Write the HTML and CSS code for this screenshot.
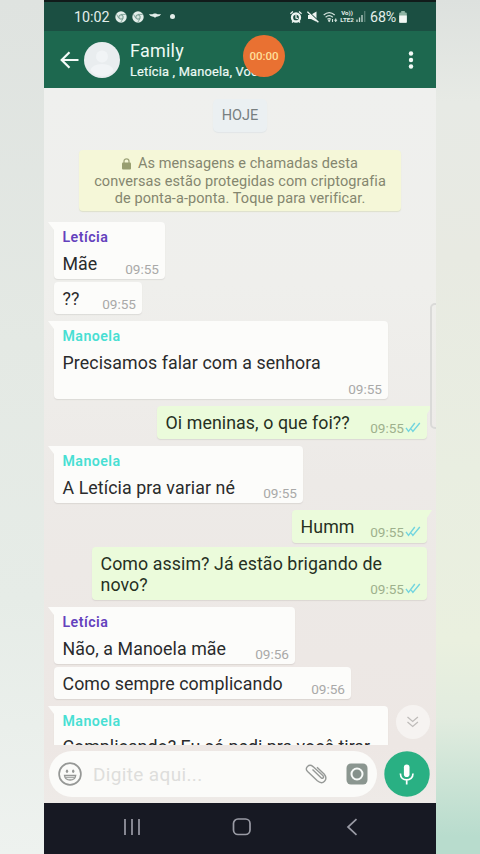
FILE: index.html
```html
<!DOCTYPE html>
<html lang="pt-BR">
<head>
<meta charset="utf-8">
<title>Family</title>
<link rel="stylesheet" href="styles.css">
</head>
<body>
<svg class="defs" width="0" height="0">
  <symbol id="ticks" viewBox="0 0 16 12"><path d="M1 6.800l2.500 3.600L9.800 2M6.200 8.100l1.700 2.300L14.800 2" fill="none" stroke="#72d5df" stroke-width="1.400"/></symbol>
  <symbol id="chrome" viewBox="0 0 12 12"><circle cx="6" cy="6" r="5.700" fill="#e3eeea"/><path d="M6 3.400h4.800M3.800 7.300L1.500 3.200M8.200 7.300L5.700 11.400" stroke="#6d9388" stroke-width=".8"/><circle cx="6" cy="6" r="2.200" fill="#d6e5df" stroke="#6d9388"/></symbol>
</svg>
<div class="phone">
  <div class="status">
    <span class="clock">10:02</span>
    <svg class="s-chrome" width="12" height="12"><use href="#chrome"/></svg>
    <svg class="s-chrome" width="12" height="12"><use href="#chrome"/></svg>
    <svg class="s-bat" width="12" height="6" viewBox="0 0 12 6"><path d="M0 1Q3 1.600 4 1L5 .5h2l1 .5q1 .6 4 0-.8 2.400-3.200 2.500Q7.500 3.500 6 4.700 4.500 3.500 3.200 3.500.800 3.400 0 1z" fill="#e3eeea"/></svg>
    <span class="s-dot"></span>
    <div class="status-right">
      <svg width="12" height="12" viewBox="0 0 12 12"><circle cx="6" cy="6.500" r="4" fill="none" stroke="#eef5f2" stroke-width="2.300"/><path d="M.4 2.700L3 .6M11.600 2.700L9 .6M2 11.500l1.500-1.500M10 11.500L8.500 10M6 4v3l2 .6" fill="none" stroke="#eef5f2" stroke-width="1.300"/></svg>
      <svg class="s-mute" width="12" height="12" viewBox="0 0 12 12"><path d="M1 4h2.500L9.500.5v10.200L4 8H1z" fill="#eef5f2"/><path d="M1 .2l11 10.500" stroke="#1b4f42" stroke-width="1.300"/><path d="M.4.700l11 10.500" stroke="#eef5f2" stroke-width="1.400"/></svg>
      <svg class="s-wifi" width="15" height="12" viewBox="0 0 15 12"><path d="M.7 4Q6.200-.8 11.700 4M2.600 6.200q3.600-3 7.200 0M4.400 8.300q1.800-1.500 3.600 0" fill="none" stroke="#d5e4df" stroke-width="1.200"/><path d="M6.200 8.200l1.400 1.500-1.400 1.600-1.400-1.600z" fill="#d5e4df"/><path d="M9.500 8v3M12.700 7.500v3.600M11.300 9.300h2.800" stroke="#d5e4df" stroke-width="1.100"/></svg>
      <span class="lte"><b>Vo))</b><b>LTE2</b></span>
      <svg class="s-signal" width="10" height="11" viewBox="0 0 10 11"><path d="M1 8.500V11M3.500 6.500V11M6 4V11" stroke="#c6d9d2" stroke-width="1.300"/><path d="M8.700 0V11" stroke="#588075" stroke-width="1.300"/></svg>
      <span class="pct">68%</span>
      <svg class="s-batt" width="8" height="12" viewBox="0 0 8 12"><path d="M2.200 0h3.600v1.500h1q1 0 1 1V11q0 .8-.8.8H1Q.2 11.800.2 11V2.500q0-1 1-1h1z" fill="#8fb5a5"/><path d="M.2 4.500h7.600V11q0 .8-.8.8H1Q.2 11.800.2 11z" fill="#f2f7f4"/></svg>
    </div>
  </div>
  <header class="header">
    <svg class="back" width="19" height="18" viewBox="0 0 19 18"><path d="M18.500 9H2M9.500 1.200L1.700 9l7.800 7.800" fill="none" stroke="#f4fbf8" stroke-width="2.200"/></svg>
    <svg class="avatar" width="36" height="36" viewBox="0 0 36 36"><circle cx="18" cy="18" r="18" fill="#e9edef"/><circle cx="18" cy="14.500" r="6" fill="#f1f4f6"/><path d="M6.500 28.500Q8 22 18 22t11.500 6.500Q25 34 18 34T6.500 28.500z" fill="#f1f4f6"/></svg>
    <div class="titles">
      <div class="title">Family</div>
      <div class="members">Letícia , Manoela, Você</div>
    </div>
    <svg class="more" width="6" height="18" viewBox="0 0 6 18"><circle cx="3" cy="2.500" r="2.200"/><circle cx="3" cy="9" r="2.200"/><circle cx="3" cy="15.500" r="2.200"/></svg>
    <div class="timer">00:00</div>
  </header>
  <main class="chat">
    <div class="day">HOJE</div>
    <div class="notice">
      <div class="n1"><svg width="9" height="12" viewBox="0 0 9 12"><path d="M2 5V3.300a2.500 2.500 0 0 1 5 0V5" fill="none" stroke="#a0a57b" stroke-width="1.300"/><rect y="4.500" width="9" height="7" rx="1" fill="#989e70"/></svg>As mensagens e chamadas desta</div>
      <div class="n2">conversas estão protegidas com criptografia</div>
      <div class="n3">de ponta-a-ponta. Toque para verificar.</div>
    </div>
    <div class="msg in tail w-mae"><div class="name leticia">Letícia</div><div class="text">Mãe</div><div class="time">09:55</div></div>
    <div class="msg in next w-qq"><div class="text">??</div><div class="time">09:55</div></div>
    <div class="msg in tail tall w-full"><div class="name manoela">Manoela</div><div class="text">Precisamos falar com a senhora</div><div class="time">09:55</div></div>
    <div class="msg out tail w-oi"><div class="text">Oi meninas, o que foi??</div><div class="time">09:55<svg width="16" height="12"><use href="#ticks"/></svg></div></div>
    <div class="msg in tail w-var"><div class="name manoela">Manoela</div><div class="text">A Letícia pra variar né</div><div class="time">09:55</div></div>
    <div class="msg out tail w-humm"><div class="text">Humm</div><div class="time">09:55<svg width="16" height="12"><use href="#ticks"/></svg></div></div>
    <div class="msg out next double w-assim"><div class="text">Como assim? Já estão brigando de<br>novo?</div><div class="time">09:55<svg width="16" height="12"><use href="#ticks"/></svg></div></div>
    <div class="msg in tail w-nao"><div class="name leticia">Letícia</div><div class="text">Não, a Manoela mãe</div><div class="time">09:56</div></div>
    <div class="msg in next w-comp"><div class="text">Como sempre complicando</div><div class="time">09:56</div></div>
    <div class="msg in tail tall last w-full"><div class="name manoela">Manoela</div><div class="text">Complicando? Eu só pedi pra você tirar</div></div>
    <div class="scrollmark"></div>
    <svg class="jump" width="36" height="36" viewBox="0 0 36 36"><circle cx="18" cy="17" r="17" fill="#f6f3f1"/><path d="M12.500 12l5.200 4.500 5.200-4.500M12.500 17l5.200 4.500 5.200-4.500" fill="none" stroke="#bfbcba" stroke-width="1.300"/></svg>
  </main>
  <div class="composer">
    <div class="field">
      <svg class="smile" width="24" height="24" viewBox="0 0 24 24"><circle cx="12" cy="12" r="10.900" fill="none" stroke="#969896" stroke-width="1.700"/><ellipse cx="9" cy="9.300" rx="1.200" ry="1.800" fill="#969896"/><ellipse cx="15.200" cy="9.300" rx="1.200" ry="1.800" fill="#969896"/><path d="M6.500 13.500h11.200q-.6 4.500-5.600 4.500t-5.600-4.500z" fill="#eff0ee" stroke="#969896" stroke-width="1.300"/><path d="M7.500 15.500h9.200" stroke="#969896" stroke-width=".8"/></svg>
      <span class="placeholder">Digite aqui...</span>
      <svg class="clip" width="22" height="20" viewBox="0 0 22 20"><path d="M7.500 5.500l8.300 8q1.300 1.400 2.300.4t-.3-2.300L8 2.600Q5 .1 2.500 2.500t.1 5.100l9.700 9.200q4.300 3.500 7.200.4t-.2-7L12 3.200" fill="none" stroke="#969997" stroke-width="1.400"/></svg>
      <svg class="camera" width="22" height="22" viewBox="0 0 22 22"><rect x=".5" y=".5" width="21" height="21" rx="4.500" fill="#8b9690"/><circle cx="11" cy="11" r="5.500" fill="#85918b" stroke="#f7faf8" stroke-width="2"/></svg>
    </div>
    <svg class="mic" width="46" height="46" viewBox="0 0 46 46"><circle cx="23" cy="23" r="22.700" fill="#29b083"/><rect x="19.900" y="13.500" width="5.600" height="12.500" rx="2.800" fill="#fff"/><path d="M16.400 22.500c0 8.500 12.600 8.500 12.600 0M22.700 29v4.500" fill="none" stroke="#fff" stroke-width="1.700"/></svg>
  </div>
  <nav class="nav">
    <svg width="18" height="18" viewBox="0 0 18 18"><path d="M2 1v16M9 1v16M16 1v16"/></svg>
    <svg class="home" width="20" height="18" viewBox="0 0 20 18"><rect x="1.500" y="1" width="16.500" height="15.500" rx="4.500"/></svg>
    <svg width="12" height="18" viewBox="0 0 12 18"><path d="M10.500 1.200L2 9l8.500 7.800"/></svg>
  </nav>
</div>
</body>
</html>
```
FILE: styles.css
```css
* { box-sizing: border-box; }
body {
  margin: 0;
  width: 480px;
  height: 854px;
  overflow: hidden;
  padding: 0 44px;
  font-family: Roboto, sans-serif;
  background:
    linear-gradient(180deg, #dde1de 0, #e7eae5 12%, #e8eae2 30%, #e9eee1 55%, #eaf0df 75%, #e2ecdf 84%, #b8dccd 98%) right / 44px 100% no-repeat,
    linear-gradient(180deg, #dfe3e0 0, #e4e9e4 40%, #e6ece7 70%, #eef2ef 100%);
}
svg { display: block; flex: none; }
.defs { position: absolute; }
.phone { width: 392px; height: 854px; display: flex; flex-direction: column; overflow: hidden; }

.status {
  height: 31px;
  flex: none;
  background: #1b4f42;
  border-top: 2px solid #111b1a;
  display: flex;
  align-items: center;
  padding: 0 29px 0 30px;
  color: #e3eeea;
}
.clock { font-size: 14.300px; width: 35px; margin-right: 6px; white-space: nowrap; }
.s-chrome { margin-right: 5px; }
.s-bat { margin: -2px 9px 0 0; }
.s-dot { width: 5px; height: 5px; border-radius: 50%; background: #e3eeea; }
.status-right { margin-left: auto; display: flex; align-items: center; }
.s-mute { margin-left: 5px; }
.s-wifi { margin-left: 4px; }
.lte { width: 16px; margin-left: 1px; font-size: 6.200px; line-height: 7px; text-align: center; display: flex; flex-direction: column; }
.s-signal { margin-left: 1px; }
.pct { font-size: 14.300px; margin-left: 4px; width: 28px; white-space: nowrap; letter-spacing: -.1px; }
.s-batt { margin-left: 1px; }

.header {
  height: 57px;
  flex: none;
  background: #1d684f;
  display: flex;
  align-items: center;
  padding: 0 22px 0 16px;
  position: relative;
  color: #eefaf5;
}
.back { margin-right: 5px; }
.titles { margin-left: 10px; flex: 1; white-space: nowrap; }
.title { font-size: 18px; line-height: 22px; letter-spacing: .25px; margin-top: 3px; }
.members { font-size: 12.800px; line-height: 20px; letter-spacing: .2px; -webkit-text-stroke: .2px; }
.more { fill: #f4fbf8; }
.timer {
  position: absolute;
  left: 199px;
  top: 4px;
  width: 42px;
  height: 42px;
  border-radius: 50%;
  background: #e97132;
  color: #ffdf9a;
  font-size: 11.500px;
  font-weight: 500;
  line-height: 42px;
  text-align: center;
}

.chat {
  height: 657px;
  flex: none;
  position: relative;
  overflow: hidden;
  display: flex;
  flex-direction: column;
  align-items: flex-start;
  padding: 11px 9px 0 10px;
  background: linear-gradient(180deg, #eff0ee 0, #efefec 30%, #edeae7 60%, #ede7e4 100%);
}
.day {
  width: 54px;
  height: 33px;
  flex: none;
  margin-left: 159px;
  border-radius: 5px;
  background: #ebf0f2;
  box-shadow: 0 1px 1px #e1e5e7;
  color: #777f81;
  font-size: 14.500px;
  line-height: 33px;
  text-align: center;
}
.notice {
  width: 322px;
  height: 61px;
  flex: none;
  margin: 18px 0 0 25px;
  padding-top: 5px;
  border-radius: 4px;
  background: #f5f7d8;
  box-shadow: 0 1px 1px #dddfcb;
  color: #84866f;
  font-size: 14.500px;
  letter-spacing: .08px;
  line-height: 17.700px;
  text-align: center;
  white-space: nowrap;
}
.n1 { display: flex; justify-content: center; align-items: center; }
.n1 svg { margin-right: 7px; }

.msg {
  position: relative;
  flex: none;
  height: 32px;
  margin-top: 7px;
  padding: 0 6px 0 8.500px;
  border-radius: 4px;
  background: #fcfcfa;
  box-shadow: 0 1px 1px rgba(90, 80, 70, .12);
  color: #2a2b2c;
  font-size: 17.800px;
  letter-spacing: .08px;
  line-height: 21px;
  white-space: nowrap;
}
.msg .text { padding-top: 6px; }
.name { font-size: 14.200px; font-weight: 600; line-height: 18px; padding-top: 6px; letter-spacing: .45px; }
.name + .text { padding-top: 7px; }
.leticia { color: #6442bd; }
.manoela { color: #48dfd3; }
.in.tail { height: 57px; margin-top: 11px; border-top-left-radius: 0; }
.in.tail.tall { height: 78px; margin-top: 7px; }
.in.tail.last .text { padding-top: 6px; letter-spacing: .02px; }
.out { align-self: flex-end; background: #ebfbdb; color: #26301f; }
.out.tail { height: 33px; border-top-right-radius: 0; }
.out + .in.tail { margin-top: 7px; }
.msg.next { margin-top: 3px; }
.msg.double { height: 53px; margin-top: 4px; }
.tail::before {
  content: "";
  position: absolute;
  top: 0;
  left: -6px;
  width: 6px;
  height: 8px;
  background: inherit;
  clip-path: polygon(0 0, 100% 0, 100% 100%);
}
.out.tail::before { left: auto; right: -5px; width: 5px; clip-path: polygon(0 0, 100% 0, 0 100%); }
.time {
  position: absolute;
  right: 6px;
  bottom: 2px;
  display: flex;
  align-items: center;
  font-size: 13.600px;
  letter-spacing: 0;
  line-height: 16px;
  color: #a9a9a8;
}
.out .time { color: #9eb18d; bottom: 3px; }
.time svg { margin: -3px 0 0 1px; }
.w-mae { width: 111px; }
.w-qq { width: 88px; }
.w-full { width: 334px; }
.w-oi { width: 270px; }
.w-var { width: 249px; }
.w-humm { width: 135px; }
.w-assim { width: 335px; }
.w-nao { width: 241px; }
.w-comp { width: 297px; }
.scrollmark {
  position: absolute;
  left: 386px;
  top: 215px;
  width: 12px;
  height: 126px;
  border: 2px solid #dadad8;
  border-radius: 5px;
}
.jump { position: absolute; left: 351px; top: 617px; }

.composer {
  height: 58px;
  flex: none;
  padding: 6px 6px 0 5px;
  display: flex;
  justify-content: space-between;
  background: linear-gradient(180deg, #ede7e4, #eeeae7);
}
.field {
  width: 328px;
  height: 46px;
  border-radius: 23px;
  background: #fbfbf9;
  display: flex;
  align-items: center;
  padding: 0 9px;
}
.placeholder { margin-left: 11px; font-size: 19px; letter-spacing: .35px; color: #dededc; flex: 1; white-space: nowrap; }
.clip { margin-right: 19px; }
.nav { flex: 1; background: #171923; display: flex; align-items: center; justify-content: space-between; padding: 0 78px 3px 79px; }
.nav svg { fill: none; stroke: #9a9ba5; stroke-width: 1.700; }
.nav .home { margin-right: 4px; }
```
